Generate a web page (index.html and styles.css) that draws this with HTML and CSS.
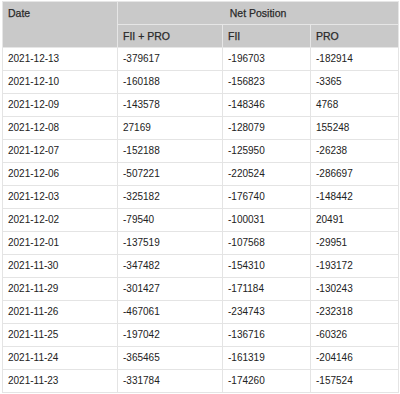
FILE: index.html
```html
<!DOCTYPE html>
<html lang="en">
<head>
  <meta charset="UTF-8" />
  <title>Net Position</title>
  <link rel="stylesheet" href="styles.css">
</head>
<body>
  <table class="net-table">
    <colgroup>
      <col class="col-date">
      <col class="col-total">
      <col class="col-fii">
      <col class="col-pro">
    </colgroup>
    <thead>
      <tr>
        <th rowspan="2" class="date-head">Date</th>
        <th colspan="3" class="group-head">Net Position</th>
      </tr>
      <tr>
        <th>FII + PRO</th>
        <th>FII</th>
        <th>PRO</th>
      </tr>
    </thead>
    <tbody>
      <tr><td>2021-12-13</td><td>-379617</td><td>-196703</td><td>-182914</td></tr>
      <tr><td>2021-12-10</td><td>-160188</td><td>-156823</td><td>-3365</td></tr>
      <tr><td>2021-12-09</td><td>-143578</td><td>-148346</td><td>4768</td></tr>
      <tr><td>2021-12-08</td><td>27169</td><td>-128079</td><td>155248</td></tr>
      <tr><td>2021-12-07</td><td>-152188</td><td>-125950</td><td>-26238</td></tr>
      <tr><td>2021-12-06</td><td>-507221</td><td>-220524</td><td>-286697</td></tr>
      <tr><td>2021-12-03</td><td>-325182</td><td>-176740</td><td>-148442</td></tr>
      <tr><td>2021-12-02</td><td>-79540</td><td>-100031</td><td>20491</td></tr>
      <tr><td>2021-12-01</td><td>-137519</td><td>-107568</td><td>-29951</td></tr>
      <tr><td>2021-11-30</td><td>-347482</td><td>-154310</td><td>-193172</td></tr>
      <tr><td>2021-11-29</td><td>-301427</td><td>-171184</td><td>-130243</td></tr>
      <tr><td>2021-11-26</td><td>-467061</td><td>-234743</td><td>-232318</td></tr>
      <tr><td>2021-11-25</td><td>-197042</td><td>-136716</td><td>-60326</td></tr>
      <tr><td>2021-11-24</td><td>-365465</td><td>-161319</td><td>-204146</td></tr>
      <tr><td>2021-11-23</td><td>-331784</td><td>-174260</td><td>-157524</td></tr>
    </tbody>
  </table>
</body>
</html>
```

FILE: styles.css
```css
* {
  box-sizing: border-box;
  margin: 0;
  padding: 0;
}

body {
  font-family: 'Liberation Sans', Arial, sans-serif;
  font-size: 10px;
  color: #222;
  background-color: white;
}

.net-table {
  margin: 1px 2px;
  width: 396px;
  border-collapse: collapse;
  table-layout: fixed;
}

.col-date {
  width: 115px;
}

.col-total {
  width: 105px;
}

.col-fii {
  width: 88px;
}

.col-pro {
  width: 88px;
}

.net-table th,
.net-table td {
  border: 1px solid #e4e4e4;
  padding: 5px 5px;
  line-height: 12px;
  text-align: left;
  vertical-align: top;
}

.net-table th {
  background-color: #c9c9c9;
  color: #2a2a2a;
  font-size: 10.5px;
  font-weight: normal;
  border-color: #e6e6e6;
  -webkit-text-stroke: 0.25px #2a2a2a;
}

.net-table .group-head {
  text-align: center;
}
```
